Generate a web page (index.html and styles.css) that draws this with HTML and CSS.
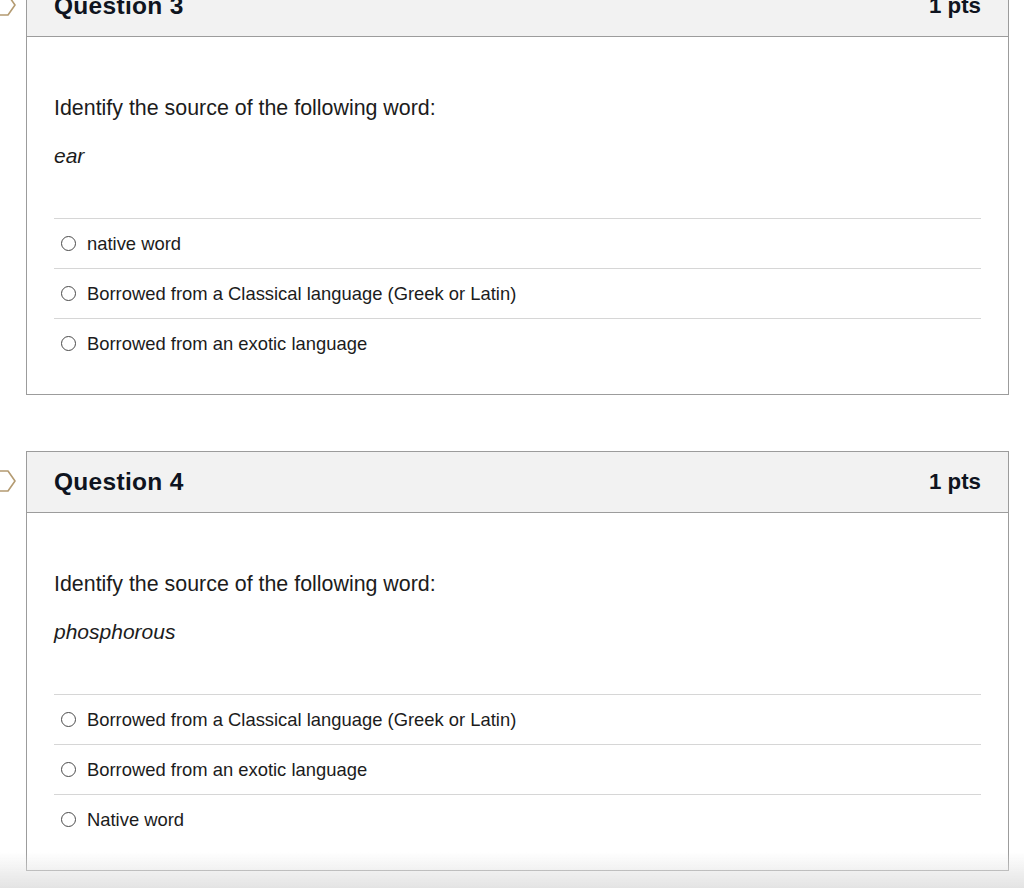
FILE: index.html
```html
<!DOCTYPE html>
<html lang="en">
<head>
<meta charset="utf-8">
<title>Quiz</title>
<link rel="stylesheet" href="styles.css">
</head>
<body>
<div class="page">
  <section class="card">
    <svg class="flag" width="16" height="22" viewBox="0 0 16 22"><polygon points="-6,1 8,1 15,11 8,21 -6,21" fill="none" stroke="#b49b72" stroke-width="1.6" stroke-linejoin="round"/></svg>
    <header class="card-head"><span class="q-title">Question 3</span><span class="q-pts">1 pts</span></header>
    <div class="card-body">
      <p class="q-text">Identify the source of the following word:</p>
      <p class="q-word">ear</p>
      <ul class="answers">
        <li class="answer"><span class="radio"></span>native word</li>
        <li class="answer"><span class="radio"></span>Borrowed from a Classical language (Greek or Latin)</li>
        <li class="answer"><span class="radio"></span>Borrowed from an exotic language</li>
      </ul>
    </div>
  </section>
  <section class="card">
    <svg class="flag" width="16" height="22" viewBox="0 0 16 22"><polygon points="-6,1 8,1 15,11 8,21 -6,21" fill="none" stroke="#b49b72" stroke-width="1.6" stroke-linejoin="round"/></svg>
    <header class="card-head"><span class="q-title">Question 4</span><span class="q-pts">1 pts</span></header>
    <div class="card-body">
      <p class="q-text">Identify the source of the following word:</p>
      <p class="q-word">phosphorous</p>
      <ul class="answers">
        <li class="answer"><span class="radio"></span>Borrowed from a Classical language (Greek or Latin)</li>
        <li class="answer"><span class="radio"></span>Borrowed from an exotic language</li>
        <li class="answer"><span class="radio"></span>Native word</li>
      </ul>
    </div>
  </section>
</div>
<div class="fade"></div>
</body>
</html>
```

FILE: styles.css
```css
html, body {
  margin: 0;
  padding: 0;
  background: #ffffff;
  overflow: hidden;
  height: 888px;
}
body {
  font-family: "Liberation Sans", Arial, Helvetica, sans-serif;
  color: #1c1c1c;
}
.page {
  display: flex;
  flex-direction: column;
  gap: 56px;
  padding: 0 15px 0 26px;
  margin-top: -25px;
}
.card {
  position: relative;
  border: 1px solid #9c9c9c;
  background: #fff;
}
.flag {
  position: absolute;
  left: -27px;
  top: 18px;
  overflow: visible;
}
.card-head {
  height: 60px;
  background: #f2f2f2;
  border-bottom: 1px solid #9c9c9c;
  padding: 0 27px;
  display: flex;
  justify-content: space-between;
  align-items: center;
  color: #0f1420;
  font-weight: bold;
}
.q-title {
  font-size: 24.5px;
  letter-spacing: 0.3px;
}
.q-pts {
  font-size: 22.3px;
}
.card-body {
  padding: 56px 27px 26px 27px;
}
.q-text {
  margin: 0;
  font-size: 21.4px;
  line-height: 30px;
}
.q-word {
  margin: 19px 0 0 0;
  font-size: 21px;
  font-style: italic;
  line-height: 28px;
}
.answers {
  list-style: none;
  margin: 48px 0 0 0;
  padding: 0;
}
.answer {
  height: 50px;
  border-top: 1px solid #d6d6d6;
  box-sizing: border-box;
  display: flex;
  align-items: center;
  padding-left: 7px;
  gap: 11px;
  font-size: 18.4px;
}
.radio {
  width: 15px;
  height: 15px;
  border: 1.3px solid #4a4a4a;
  border-radius: 50%;
  box-sizing: border-box;
  flex: none;
}
.fade {
  position: fixed;
  left: 0;
  right: 0;
  bottom: 0;
  height: 36px;
  background: linear-gradient(to bottom, rgba(228,228,228,0), rgba(226,226,226,0.95));
  pointer-events: none;
}
```
